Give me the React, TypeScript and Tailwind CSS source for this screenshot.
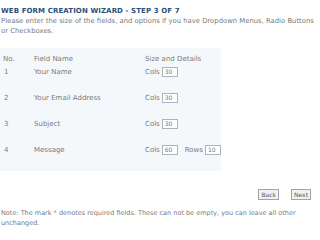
import React from "react";

const Box = ({ v, w = "w-[16px]" }: { v: string; w?: string }) => (
  <span className={`inline-flex items-center ${w} h-[10px] border border-[#a9b4bf] bg-white pl-[2px] text-[6px] leading-none text-[#777]`}>
    {v}
  </span>
);

const rows = [
  { no: "1", name: "Your Name", cols: "30" },
  { no: "2", name: "Your Email Address", cols: "30" },
  { no: "3", name: "Subject", cols: "30" },
  { no: "4", name: "Message", cols: "60", rows: "10" },
];

export default function App() {
  return (
    <div className="w-[320px] h-[227px] bg-white overflow-hidden text-[#7a7a7a] text-[7px] leading-[10px]" style={{ fontFamily: '"DejaVu Sans", Verdana, sans-serif' }}>
      <div className="pt-[6px] pl-[1px]">
        <div className="font-semibold text-[#2c5176] tracking-[0.1px]">WEB FORM CREATION WIZARD - STEP 3 OF 7</div>
        <div className="whitespace-nowrap text-[6.85px]">
          Please enter the size of the fields, and options if you have Dropdown Menus, Radio Buttons
          <br />
          or Checkboxes.
        </div>
      </div>
      <div className="mt-[12px] w-[221px] bg-[#f4f8fb]">
        <div className="grid grid-cols-[34px_111px_1fr] h-[18px] pt-[6px]">
          <div className="pl-[3px]">No.</div>
          <div>Field Name</div>
          <div>Size and Details</div>
        </div>
        {rows.map((r, i) => (
          <div key={r.no} className={`grid grid-cols-[34px_111px_1fr] ${i === 3 ? "h-[27px]" : "h-[26px]"} pt-[1px]`}>
            <div className="pl-[4px]">{r.no}</div>
            <div>{r.name}</div>
            <div className="flex items-center h-[10px] gap-[2px]">
              <span>Cols</span>
              <Box v={r.cols} />
              {r.rows && (
                <>
                  <span className="ml-[5px]">Rows</span>
                  <Box v={r.rows} />
                </>
              )}
            </div>
          </div>
        ))}
      </div>
      <div className="flex justify-end gap-[12px] pr-[9px] mt-[18px]">
        <button className="h-[11px] px-[2px] border border-[#9aa5b1] bg-[#f2f2f2] text-[6px] leading-none text-[#555]" style={{ fontFamily: '"DejaVu Sans", Verdana, sans-serif' }}>Back</button>
        <button className="h-[11px] px-[2px] border border-[#9aa5b1] bg-[#f2f2f2] text-[6px] leading-none text-[#555]" style={{ fontFamily: '"DejaVu Sans", Verdana, sans-serif' }}>Next</button>
      </div>
      <div className="mt-[8px] pl-[1px] whitespace-nowrap text-[6.5px]">
        Note: The mark * denotes required fields. These can not be empty, you can leave all other
        <br />
        unchanged.
      </div>
    </div>
  );
}
